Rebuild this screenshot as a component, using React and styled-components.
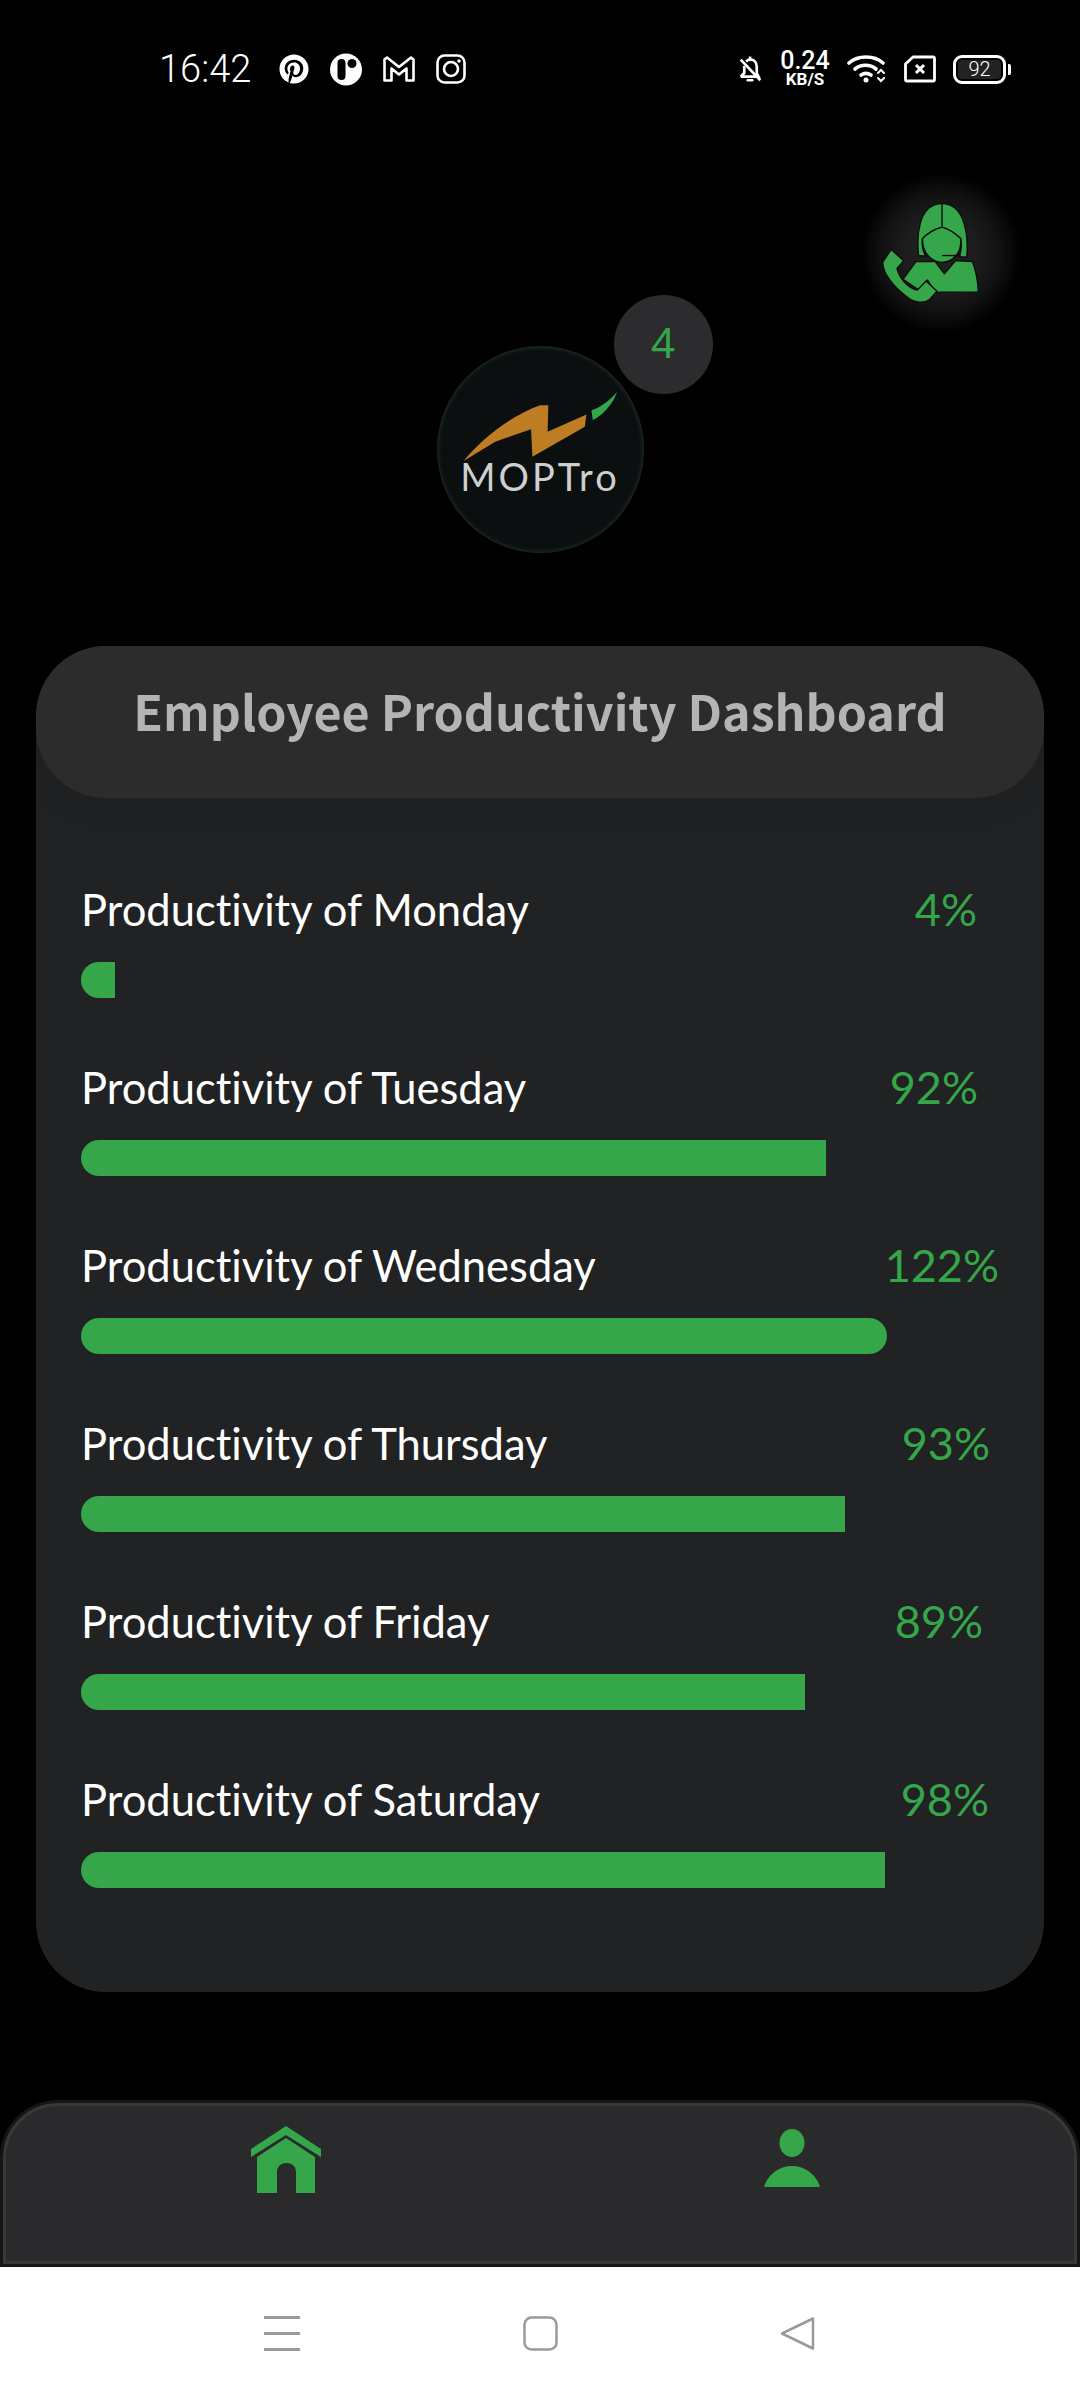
import React from 'react';
import styled, { createGlobalStyle } from 'styled-components';
import { FaPinterest } from 'react-icons/fa';

const GREEN = '#35a64a';

const GlobalStyle = createGlobalStyle`
  html, body {
    margin: 0;
    padding: 0;
    background: #000;
  }
  * {
    box-sizing: border-box;
  }
`;

const Screen = styled.div`
  width: 1080px;
  height: 2400px;
  background: #000;
  display: flex;
  flex-direction: column;
  overflow: hidden;
`;

const StatusBar = styled.div`
  height: 136px;
  padding: 51px 69px 0 159px;
  display: flex;
  justify-content: space-between;
  align-items: flex-start;
  color: #fff;
`;

const StatusGroup = styled.div`
  height: 36px;
  display: flex;
  align-items: center;
  gap: ${p => p.$gap || 0}px;
`;

const Clock = styled.span`
  font-family: Roboto, sans-serif;
  font-weight: 300;
  font-size: 38px;
  margin-right: 7px;
`;

const Speed = styled.div`
  width: 50px;
  display: flex;
  flex-direction: column;
  align-items: center;
  font-family: Roboto, sans-serif;
  color: #fff;
`;

const SpeedValue = styled.span`
  font-size: 25px;
  line-height: 20px;
  font-weight: 500;
`;

const SpeedUnit = styled.span`
  font-size: 17px;
  line-height: 16px;
  font-weight: 700;
`;

const Battery = styled.div`
  position: relative;
  width: 53px;
  height: 29px;
  border: 3px solid #fff;
  border-radius: 9px;
  margin-right: 5px;
  padding: 2px;
  &:after {
    content: '';
    position: absolute;
    right: -8px;
    top: 6px;
    width: 3px;
    height: 11px;
    background: #fff;
    border-radius: 0 2px 2px 0;
  }
`;

const BatteryLevel = styled.div`
  height: 100%;
  background: #222;
  border-radius: 4px;
  color: #fff;
  font-family: Roboto, sans-serif;
  font-weight: 300;
  font-size: 20px;
  line-height: 19px;
  text-align: center;
`;

const TopArea = styled.div`
  height: 510px;
  display: flex;
  flex-direction: column;
  align-items: center;
`;

const AgentGlow = styled.div`
  align-self: flex-end;
  width: 160px;
  height: 160px;
  margin: 37px 59px 0 0;
  padding-right: 20px;
  background: radial-gradient(circle closest-side, #212121 0%, #1d1d1d 45%, #111 75%, #000 100%);
  display: flex;
  align-items: center;
  justify-content: center;
`;

const LogoWrap = styled.div`
  position: relative;
  margin-top: 13px;
  width: 207px;
  height: 207px;
`;

const Logo = styled.div`
  width: 207px;
  height: 207px;
  border-radius: 50%;
  background: #0b0f0f;
  box-shadow: inset 0 0 4px 1px #22302f;
  display: flex;
  flex-direction: column;
  align-items: center;
  padding-top: 44px;
`;

const LogoName = styled.span`
  font-family: Lato, sans-serif;
  font-weight: 400;
  font-size: 38px;
  line-height: 34px;
  letter-spacing: 3px;
  color: #cfcfcf;
  margin-top: -3px;
`;

const Badge = styled.div`
  position: absolute;
  top: -51px;
  right: -69px;
  width: 99px;
  height: 99px;
  padding-bottom: 6px;
  border-radius: 50%;
  background: #2c2c2e;
  color: ${GREEN};
  font-family: "Noto Sans", sans-serif;
  font-weight: 400;
  font-size: 42px;
  display: flex;
  align-items: center;
  justify-content: center;
`;

const Card = styled.section`
  margin: 0 36px;
  height: 1346px;
  background: #212223;
  border-radius: 70px;
`;

const CardHeader = styled.header`
  height: 152px;
  padding-bottom: 24px;
  background: #2c2c2c;
  border-radius: 70px;
  box-shadow: 0 10px 30px rgba(0, 0, 0, 0.08);
  display: flex;
  align-items: center;
  justify-content: center;
`;

const Title = styled.h1`
  margin: 0;
  font-family: "Noto Sans CJK JP", "Noto Sans", sans-serif;
  font-weight: 700;
  font-size: 48.4px;
  color: #b4b4b4;
`;

const RowList = styled.div`
  padding: 56px 45px 0;
  display: flex;
  flex-direction: column;
  gap: 34px;
`;

const Row = styled.div`
  height: 144px;
  display: flex;
  flex-direction: column;
  justify-content: flex-end;
  gap: 23px;
`;

const RowHead = styled.div`
  display: flex;
  justify-content: space-between;
  align-items: center;
  height: 60px;
`;

const Label = styled.span`
  font-family: Lato, sans-serif;
  font-size: 43.5px;
  font-weight: 400;
  font-variant-ligatures: none;
  color: #fff;
`;

const Value = styled.span`
  font-family: Lato, sans-serif;
  font-size: 45px;
  font-weight: 400;
  color: ${GREEN};
  margin-right: ${p => p.$offset}px;
`;

const Bar = styled.div`
  height: 36px;
  background: ${GREEN};
  border-radius: ${p => (p.$round ? '18px' : '18px 0 0 18px')};
`;

const BottomNav = styled.nav`
  margin-top: 108px;
  height: 167px;
  background: #2a2a2c;
  border: 3px solid #161616;
  border-radius: 58px 58px 0 0;
  box-shadow: inset 0 0 0 3px #38383a;
  display: flex;
  align-items: flex-start;
`;

const NavSlot = styled.div`
  flex: 1;
  display: flex;
  justify-content: center;
  padding: ${p => p.$top}px ${p => p.$right || 0}px 0 ${p => p.$left || 0}px;
`;

const SystemBar = styled.div`
  flex: 1;
  background: #fff;
  padding: 49px 265px 0 264px;
  display: flex;
  justify-content: space-between;
  align-items: flex-start;
`;

const Icon = styled.svg`
  display: block;
  flex: none;
`;

const days = [
  { day: 'Monday', value: '4%', width: 34, offset: 22 },
  { day: 'Tuesday', value: '92%', width: 745, offset: 21 },
  { day: 'Wednesday', value: '122%', width: 806, offset: 0, round: true },
  { day: 'Thursday', value: '93%', width: 764, offset: 9 },
  { day: 'Friday', value: '89%', width: 724, offset: 16 },
  { day: 'Saturday', value: '98%', width: 804, offset: 10 },
];

const BellOff = () => (
  <Icon width="25" height="31" viewBox="0 0 28 32" fill="none" stroke="#fff" strokeWidth="3">
    <path d="M3 24h20L21 20v-7c0-5-3-8-7-8-2 0-4 1-5 2M7 12v8l-4 4" />
    <path d="M11 28h5" strokeLinecap="round" />
    <path d="M12 3h3" />
    <path d="M3 5l22 23" />
  </Icon>
);

const Wifi = () => (
  <Icon width="40" height="28" viewBox="0 0 40 28" fill="none" stroke="#fff" strokeWidth="3.6" strokeLinecap="round">
    <path d="M2 8c9-8 25-8 34 0" />
    <path d="M8 14c6-5 15-5 21 0" />
    <path d="M14 20c3-2 7-2 10 0" />
    <circle cx="19" cy="25" r="2.500" fill="#fff" stroke="none" />
    <path d="M31 18l3-3 3 3M31 23l3 3 3-3" strokeWidth="2" />
  </Icon>
);

const Sim = () => (
  <Icon width="32" height="28" viewBox="0 0 32 28" fill="none" stroke="#fff" strokeWidth="2.8">
    <path d="M9 2h20a1.5 1.5 0 0 1 1.5 1.5v21a1.5 1.5 0 0 1-1.5 1.5H3a1.5 1.5 0 0 1-1.5-1.5V9z" strokeLinejoin="round" />
    <path d="M12 10l8 8M20 10l-8 8" strokeWidth="3" />
  </Icon>
);

const Mail = () => (
  <Icon width="32" height="26" viewBox="0 0 32 26" fill="none" stroke="#fff" strokeWidth="2.6" strokeLinejoin="round">
    <path d="M1.5 3.5L4 1.5 16 11 28 1.5l2.5 2V24.500h-7V12.500L16 18.500 8.500 12.500V24.500h-7z" />
  </Icon>
);

const Insta = () => (
  <Icon width="30" height="30" viewBox="0 0 30 30" fill="none" stroke="#fff" strokeWidth="2.6">
    <rect x="1.500" y="1.500" width="27" height="27" rx="7" />
    <circle cx="15" cy="15" r="7" />
    <circle cx="23" cy="7" r="1.800" fill="#fff" stroke="none" />
  </Icon>
);

const RoundApp = () => (
  <Icon width="32" height="33" viewBox="0 0 32 33">
    <circle cx="16" cy="16.500" r="16" fill="#fff" />
    <rect x="7.500" y="6" width="8" height="21" rx="4" fill="#000" />
    <circle cx="22" cy="10.500" r="4.500" fill="#000" />
  </Icon>
);

const AgentIcon = () => (
  <Icon width="100" height="104" viewBox="125 90 295 305" stroke="#0c0c0c" strokeWidth="4" fill={GREEN} strokeLinejoin="round">
    <path d="M236 250c-6-50-4-153 69-153 70 0 78 100 73 158l-22-2c8-20 6-40 4-53-15-15-35-28-55-34-20 6-45 20-58 34-2 20 2 38 10 52z" />
    <path d="M305 97v66" fill="none" />
    <path d="M248 200c13-15 37-28 57-34 20 6 40 19 55 34 4 38-20 70-55 70-32 0-60-30-57-70z" />
    <path d="M305 250h55" fill="none" />
    <path d="M228 268h57l27 36 33-39 50 3c8 20 17 60 17 90H285l-23-36-27 28-45-30z" />
    <path d="M155 232l37 33-20 23c8 32 33 57 60 64l26-27 32 30-20 23c-15 14-45 12-65-3-40-30-75-70-75-105z" />
  </Icon>
);

const LogoMark = () => (
  <Icon width="156" height="72" viewBox="150 335 470 215">
    <path d="M155 548C205 485 290 415 385 380h25l-2 80 117-52-5 37-158 90-4-83-108 38z" fill="#be7c23" />
    <path d="M540 395c15-3 52-25 77-55-10 30-35 65-73 85z" fill={GREEN} />
  </Icon>
);

const HomeIcon = () => (
  <Icon width="70" height="67" viewBox="0 0 70 67" fill={GREEN}>
    <path d="M35 0L70 23v8L35 9 0 31v-8z" />
    <path d="M35 12L64 31v36H45V46c0-12-19-12-19 0v21H6V31z" />
  </Icon>
);

const PersonIcon = () => (
  <Icon width="56" height="58" viewBox="0 0 56 58" fill={GREEN}>
    <ellipse cx="28" cy="14" rx="12.500" ry="14" />
    <path d="M0 58C4 45 15 37 28 37s24 8 28 21z" />
  </Icon>
);

const MenuIcon = () => (
  <Icon width="36" height="35" viewBox="0 0 36 35" fill="#9a9a9a">
    <rect y="0" width="36" height="3" />
    <rect y="16" width="36" height="3" />
    <rect y="32" width="36" height="3" />
  </Icon>
);

const SquareIcon = () => (
  <Icon width="35" height="35" viewBox="0 0 35 35" fill="none" stroke="#9a9a9a" strokeWidth="2.500">
    <rect x="1.500" y="1.500" width="32" height="32" rx="7" />
  </Icon>
);

const BackIcon = () => (
  <Icon width="35" height="35" viewBox="0 0 35 35" fill="none" stroke="#9a9a9a" strokeWidth="2.500" strokeLinejoin="round">
    <path d="M33 2.500v30L2 17.500z" />
  </Icon>
);

const App = () => (
  <>
    <GlobalStyle />
    <Screen>
      <StatusBar>
        <StatusGroup $gap={21}>
          <Clock>16:42</Clock>
          <FaPinterest size={30} color="#fff" />
          <RoundApp />
          <Mail />
          <Insta />
        </StatusGroup>
        <StatusGroup $gap={17}>
          <BellOff />
          <Speed>
            <SpeedValue>0.24</SpeedValue>
            <SpeedUnit>KB/S</SpeedUnit>
          </Speed>
          <Wifi />
          <Sim />
          <Battery>
            <BatteryLevel>92</BatteryLevel>
          </Battery>
        </StatusGroup>
      </StatusBar>

      <TopArea>
        <AgentGlow>
          <AgentIcon />
        </AgentGlow>
        <LogoWrap>
          <Logo>
            <LogoMark />
            <LogoName>MOPTro</LogoName>
          </Logo>
          <Badge>4</Badge>
        </LogoWrap>
      </TopArea>

      <Card>
        <CardHeader>
          <Title>Employee Productivity Dashboard</Title>
        </CardHeader>
        <RowList>
          {days.map(d => (
            <Row key={d.day}>
              <RowHead>
                <Label>Productivity of {d.day}</Label>
                <Value $offset={d.offset}>{d.value}</Value>
              </RowHead>
              <Bar $round={d.round} style={{ width: d.width }} />
            </Row>
          ))}
        </RowList>
      </Card>

      <BottomNav>
        <NavSlot $top={23} $left={30}>
          <HomeIcon />
        </NavSlot>
        <NavSlot $top={26} $right={32}>
          <PersonIcon />
        </NavSlot>
      </BottomNav>

      <SystemBar>
        <MenuIcon />
        <SquareIcon />
        <BackIcon />
      </SystemBar>
    </Screen>
  </>
);

export default App;
